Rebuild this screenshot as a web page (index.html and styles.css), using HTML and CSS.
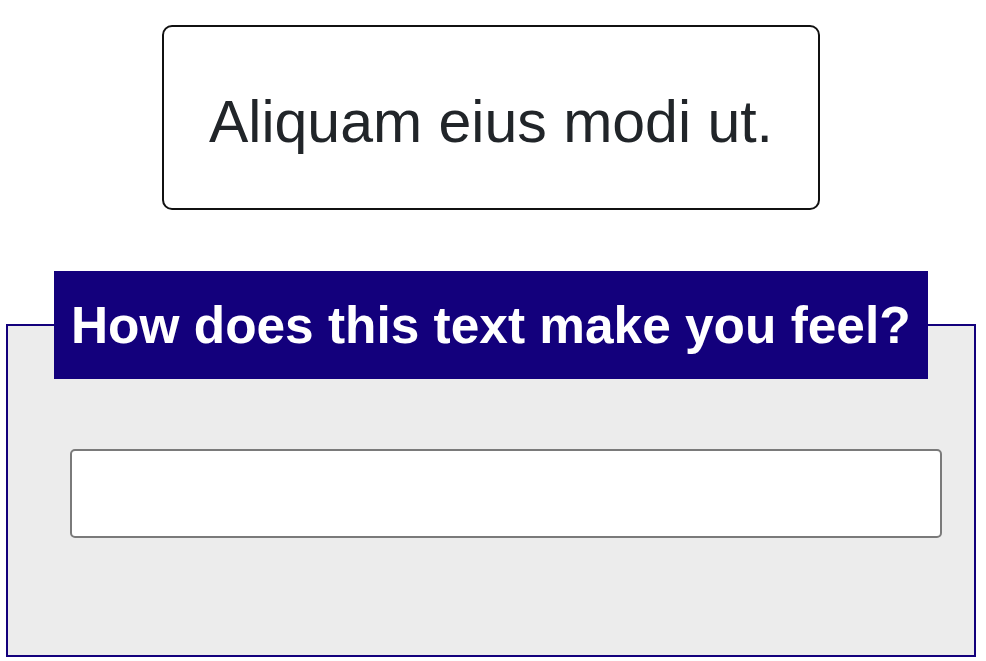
FILE: index.html
```html
<!DOCTYPE html>
<html lang="en">
<head>
<meta charset="utf-8">
<title>Feel</title>
<link rel="stylesheet" href="styles.css">
</head>
<body>
<div class="page">
  <div class="quote">
    <p class="quote-text">Aliquam eius modi ut.</p>
  </div>
  <fieldset class="feel">
    <legend class="feel-legend">How does this text make you feel?</legend>
    <div class="feel-body">
      <input class="feel-input" type="text" aria-label="Your feeling">
    </div>
  </fieldset>
</div>
</body>
</html>
```

FILE: styles.css
```css
html, body {
  margin: 0;
  padding: 0;
  background: #ffffff;
}

.page {
  padding: 25px 10px 0 6px;
  font-family: "Liberation Sans", Arial, sans-serif;
}

.quote {
  box-sizing: border-box;
  width: 658px;
  height: 185px;
  margin: 0 auto;
  padding-top: 10px;
  border: 2px solid #111111;
  border-radius: 10px;
  display: flex;
  align-items: center;
  justify-content: center;
}

.quote-text {
  margin: 0;
  font-size: 59px;
  font-weight: 400;
  color: #212529;
  line-height: 1;
}

.feel {
  margin: 61px 0 0 0;
  padding: 0;
  border: 2px solid #13007c;
  background: #ececec;
  min-width: 0;
}

.feel-legend {
  margin-left: 46px;
  padding: 0 17px;
  background: #13007c;
  color: #ffffff;
  font-weight: 700;
  font-size: 51.4px;
  line-height: 108px;
}

.feel-body {
  padding: 70px 32px 117px 62px;
}

.feel-input {
  box-sizing: border-box;
  display: block;
  width: 100%;
  height: 89px;
  margin: 0;
  border: 2px solid #7a7a7a;
  border-radius: 5px;
  background: #ffffff;
  font: inherit;
}
```
